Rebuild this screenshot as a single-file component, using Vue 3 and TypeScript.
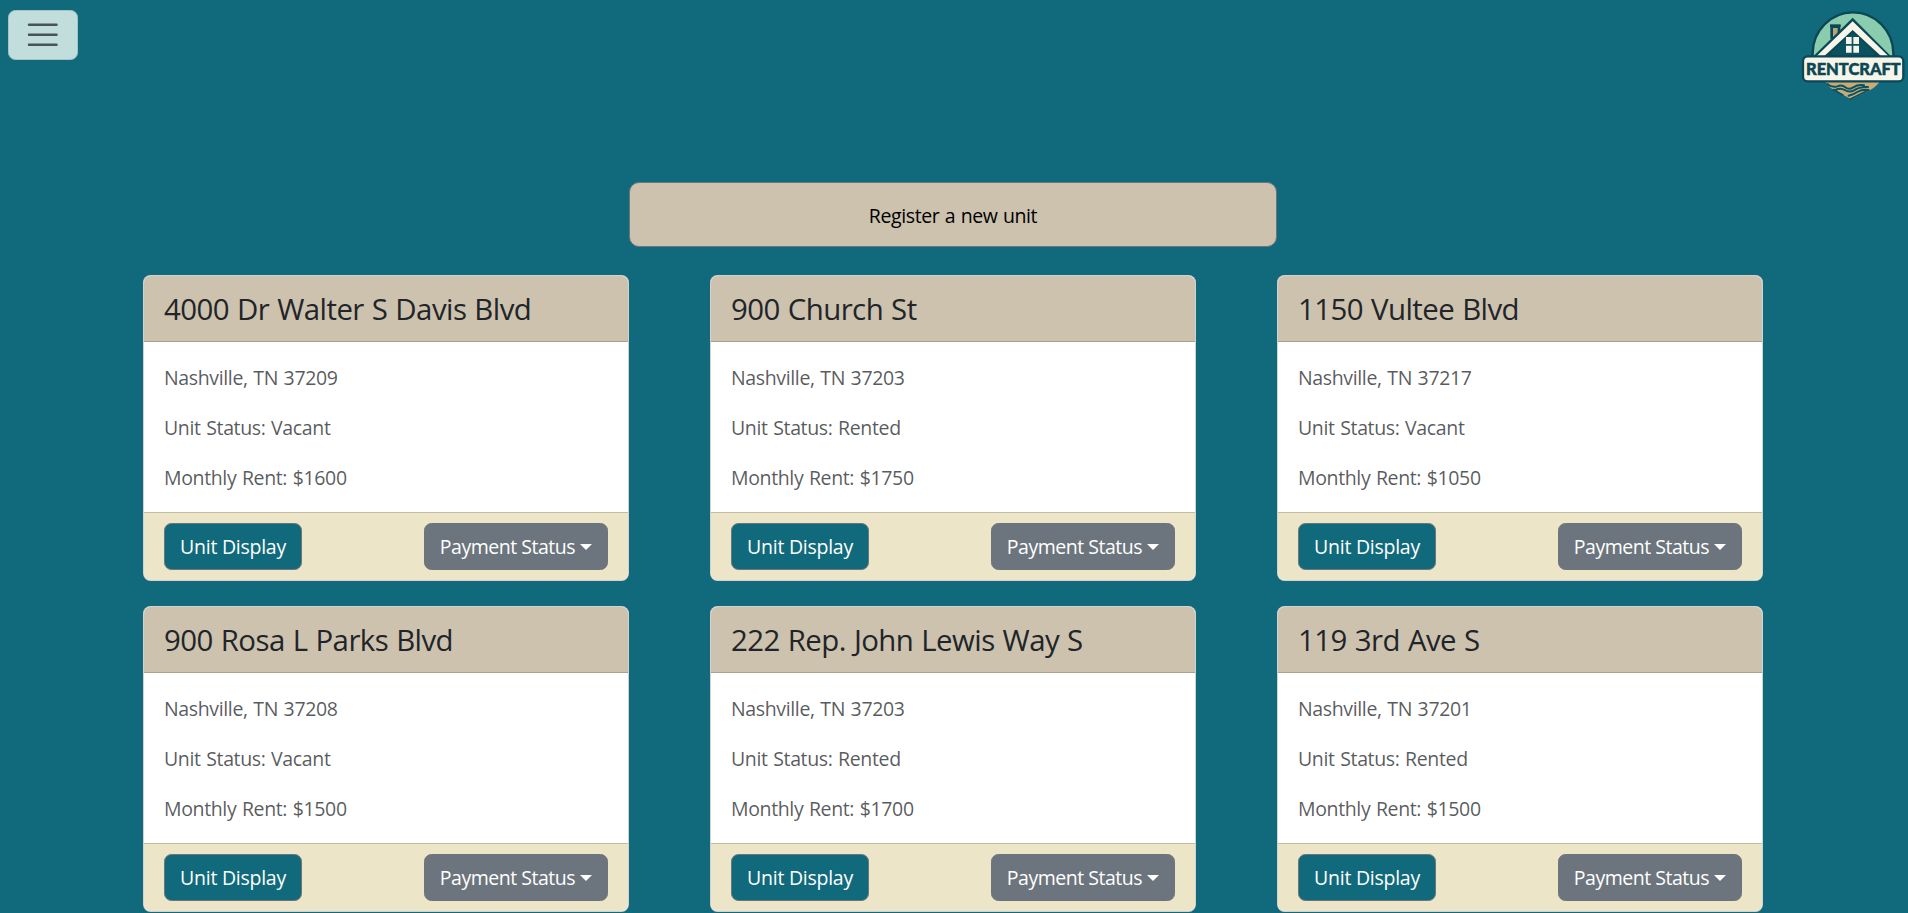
<script setup lang="ts">
interface Unit {
  address: string
  city: string
  status: 'Vacant' | 'Rented'
  rent: number
}

const units: Unit[] = [
  { address: '4000 Dr Walter S Davis Blvd', city: 'Nashville, TN 37209', status: 'Vacant', rent: 1600 },
  { address: '900 Church St', city: 'Nashville, TN 37203', status: 'Rented', rent: 1750 },
  { address: '1150 Vultee Blvd', city: 'Nashville, TN 37217', status: 'Vacant', rent: 1050 },
  { address: '900 Rosa L Parks Blvd', city: 'Nashville, TN 37208', status: 'Vacant', rent: 1500 },
  { address: '222 Rep. John Lewis Way S', city: 'Nashville, TN 37203', status: 'Rented', rent: 1700 },
  { address: '119 3rd Ave S', city: 'Nashville, TN 37201', status: 'Rented', rent: 1500 },
]
</script>

<template>
  <div class="page">
    <header class="topbar">
      <button class="menu-toggle" type="button" aria-label="Toggle navigation">
        <svg viewBox="0 0 30 30" class="menu-icon">
          <path d="M4 7h22M4 15h22M4 23h22" />
        </svg>
      </button>
      <svg class="logo" viewBox="0 0 354 330" role="img" aria-label="Rentcraft">
        <!-- disc and ground -->
        <path d="M68 176V160A121 123 0 0 1 310 160V176Z" fill="#8accae" stroke="#0b4754" stroke-width="7" />
        <path d="M106 244H270Q258 262 234 274L184 298L128 268Q112 258 106 244Z" fill="#c9ab77" />
        <path d="M112 252Q126 264 142 259Q156 253 166 262Q176 271 190 262Q204 253 222 256M136 270Q152 262 164 270Q178 279 192 271Q208 260 234 261M176 287Q190 284 202 276Q216 268 236 270" fill="none" stroke="#0b5160" stroke-width="6" stroke-linecap="round" />
        <path d="M128 268L160 286M180 298L236 270" fill="none" stroke="#0b5160" stroke-width="5" />
        <!-- chimney and roof -->
        <path d="M125 116V80H147V100" fill="#b9a47a" stroke="#0b4754" stroke-width="8" />
        <path d="M120 77H152" stroke="#0b4754" stroke-width="8" />
        <path d="M67 172L188 53L306 172Z" fill="#0b4754" />
        <path d="M80 168L188 64L295 168H273L188 90L103 168Z" fill="#f7f5e9" />
        <path d="M124 157L188 98L252 157V174H124Z" fill="#0b5160" />
        <path d="M168 111H185V132H168ZM190 111H207V132H190ZM168 137H185V158H168ZM190 137H207V158H190Z" fill="#f7f5e9" />
        <!-- name plate -->
        <path d="M124 166H252L260 176H114Z" fill="#0b4754" />
        <rect x="39" y="169" width="301" height="75" rx="14" fill="#f7f5e9" stroke="#0b4754" stroke-width="7" />
        <text x="48" y="224" textLength="284" lengthAdjust="spacingAndGlyphs" class="logo-name">RENTCRAFT</text>
      </svg>
    </header>

    <main>
      <button class="register" type="button"><span>Register a new unit</span></button>
      <section class="units">
        <article v-for="unit in units" :key="unit.address" class="card">
          <h2 class="card-title">{{ unit.address }}</h2>
          <div class="card-body">
            <p>{{ unit.city }}</p>
            <p>Unit Status: {{ unit.status }}</p>
            <p>Monthly Rent: ${{ unit.rent }}</p>
          </div>
          <footer class="card-footer">
            <button class="btn btn-display" type="button">Unit Display</button>
            <button class="btn btn-payment" type="button"><span>Payment Status</span><i class="caret"></i></button>
          </footer>
        </article>
      </section>
    </main>
  </div>
</template>

<style>
body {
  margin: 0;
  background: #116a7b;
  overflow: hidden;
}
</style>

<style scoped>
.page {
  height: 913px;
  overflow: hidden;
  background: #116a7b;
  font-family: 'Segoe UI', 'Open Sans', 'Noto Sans', sans-serif;
  font-size: 19.5px;
  line-height: 30px;
  color: #212529;
}
button {
  box-sizing: border-box;
  font: inherit;
  margin: 0;
}
.topbar {
  display: flex;
  justify-content: space-between;
  align-items: flex-start;
  height: 182px;
}
.menu-toggle {
  display: flex;
  align-items: center;
  justify-content: center;
  width: 70px;
  height: 50px;
  margin: 10px 0 0 8px;
  padding: 0;
  border: 1px solid #a5c5c5;
  border-radius: 7.5px;
  background: #c2dedc;
}
.menu-icon {
  width: 37.5px;
  height: 37.5px;
  fill: none;
  stroke: rgba(33, 37, 41, 0.75);
  stroke-width: 2;
  stroke-linecap: round;
}
.logo {
  width: 118px;
  height: 110px;
}
.logo-name {
  font: 900 52px Lato, sans-serif;
  fill: #0b4754;
  stroke: #0b4754;
  stroke-width: 1.5;
}
.register {
  display: block;
  width: 648px;
  height: 65px;
  margin: 0 0 28px 629px;
  padding: 2px 0 0;
  border: 1px solid #6c757d;
  border-radius: 10px;
  background: #cdc2ae;
  color: #000;
  letter-spacing: -0.4px;
  word-spacing: 0.8px;
}
.units {
  display: grid;
  grid-template-columns: repeat(3, 486px);
  gap: 25px 81px;
  margin-left: 143px;
}
.card {
  box-sizing: border-box;
  height: 306px;
  border: 1px solid rgba(0, 0, 0, 0.175);
  border-radius: 7.5px;
  background: #fff;
  overflow: hidden;
}
.card-title {
  margin: 0;
  padding: 11px 20px 9px;
  border-bottom: 1px solid #a9a090;
  background: #cdc2ae;
  font-size: 29.4px;
  font-weight: 400;
  line-height: 45px;
  letter-spacing: -0.55px;
  word-spacing: 0.9px;
  white-space: nowrap;
}
.card-body {
  display: flex;
  flex-direction: column;
  gap: 20px;
  padding: 21px 20px 19px;
  color: rgba(33, 37, 41, 0.75);
  letter-spacing: -0.36px;
  word-spacing: 0.9px;
}
.card-body p {
  margin: 0;
}
.card-footer {
  display: flex;
  justify-content: space-between;
  padding: 10px 20px;
  border-top: 1px solid #c3bda4;
  background: #ece5c7;
}
.btn {
  display: flex;
  align-items: center;
  justify-content: center;
  height: 47px;
  padding: 1px 0 0;
  border: 1px solid #6c757d;
  border-radius: 7.5px;
  color: #fff;
  white-space: nowrap;
}
.btn-display {
  width: 138px;
  background: #116a7b;
  letter-spacing: -0.25px;
}
.btn-payment {
  width: 184px;
  gap: 5px;
  background: #6c757d;
  letter-spacing: -0.48px;
}
.caret {
  border-top: 6px solid #fff;
  border-right: 6px solid transparent;
  border-left: 6px solid transparent;
  margin-bottom: 1px;
}
</style>
